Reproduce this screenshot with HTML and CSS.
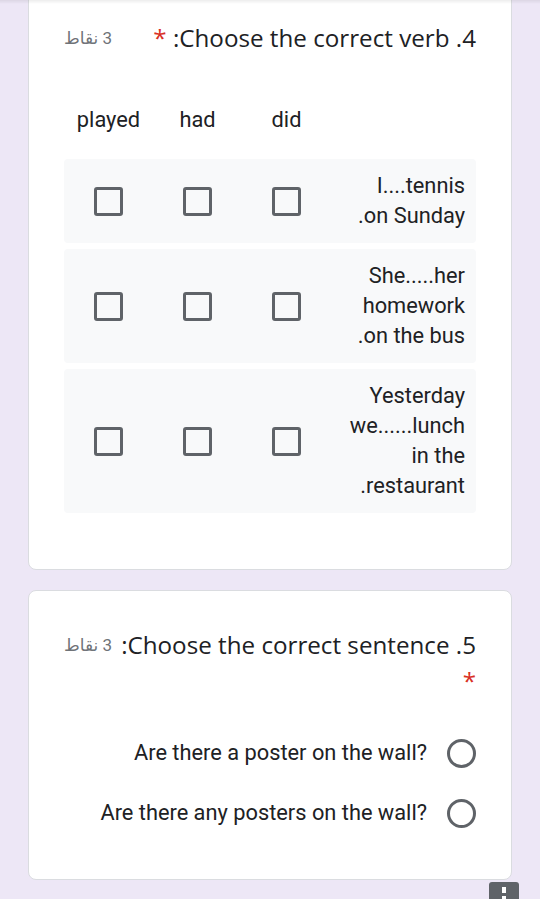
FILE: index.html
```html
<!DOCTYPE html>
<html lang="ar" dir="rtl">
<head>
<meta charset="utf-8">
<title>Form</title>
<link rel="stylesheet" href="styles.css">
</head>
<body>
<div class="top-shade"></div>
<main class="page">
  <section class="card card-first">
    <div class="q-head">
      <div class="q-title"><span class="q-text">4. Choose the correct verb:</span> <span class="req">*</span></div>
      <div class="q-points">3 نقاط</div>
    </div>
    <div class="grid" dir="ltr">
      <div class="grid-head">
        <span>played</span><span>had</span><span>did</span><span></span>
      </div>
      <div class="grid-rows">
        <div class="grid-row">
          <span class="cell"><span class="cb"></span></span>
          <span class="cell"><span class="cb"></span></span>
          <span class="cell"><span class="cb"></span></span>
          <span class="row-label" dir="rtl">I....tennis<br>on Sunday.</span>
        </div>
        <div class="grid-row">
          <span class="cell"><span class="cb"></span></span>
          <span class="cell"><span class="cb"></span></span>
          <span class="cell"><span class="cb"></span></span>
          <span class="row-label" dir="rtl">She.....her<br>homework<br>on the bus.</span>
        </div>
        <div class="grid-row">
          <span class="cell"><span class="cb"></span></span>
          <span class="cell"><span class="cb"></span></span>
          <span class="cell"><span class="cb"></span></span>
          <span class="row-label" dir="rtl">Yesterday<br>we......lunch<br>in the<br>restaurant.</span>
        </div>
      </div>
    </div>
  </section>

  <section class="card card-second">
    <div class="q-head q-head-tight">
      <div class="q-title q-title-tall"><span class="q-text">5. Choose the correct sentence:</span> <span class="req req-block">*</span></div>
      <div class="q-points q-points-tall">3 نقاط</div>
    </div>
    <div class="options">
      <div class="option"><span class="radio"></span><span class="opt-text" dir="ltr">Are there a poster on the wall?</span></div>
      <div class="option"><span class="radio"></span><span class="opt-text" dir="ltr">Are there any posters on the wall?</span></div>
    </div>
  </section>

  <div class="footer">
    <span class="badge">
      <svg width="30" height="24" viewBox="0 0 30 24"><rect x="13" y="5" width="4" height="6" fill="#fff"/><rect x="13" y="14" width="4" height="6" fill="#fff"/></svg>
    </span>
  </div>
</main>
</body>
</html>
```

FILE: styles.css
```css
html, body {
  margin: 0;
  padding: 0;
}

body {
  background: #ede7f6;
  font-family: Roboto, "DejaVu Sans", sans-serif;
  color: #202124;
  overflow: hidden;
}

.top-shade {
  position: fixed;
  top: 0;
  left: 0;
  right: 0;
  height: 4px;
  background: linear-gradient(to bottom, rgba(0, 0, 0, 0.07), rgba(0, 0, 0, 0));
  z-index: 2;
}

.page {
  padding: 0 28px;
}

.card {
  background: #fff;
  border: 1px solid #dadce0;
  border-radius: 8px;
  padding: 36px 35px;
}

.card-first {
  margin-top: -12px;
  padding-top: 33px;
  padding-bottom: 56px;
}

.card-second {
  margin-top: 20px;
  padding-top: 36px;
  padding-bottom: 36px;
}

.q-head {
  display: flex;
  justify-content: space-between;
  align-items: flex-start;
  gap: 12px;
}

.q-head-tight {
  gap: 8px;
}

.q-title {
  font-family: "Open Sans", sans-serif;
  font-size: 24.2px;
  line-height: 32px;
  color: #202124;
}

.q-text {
  white-space: nowrap;
}

.q-title-tall {
  line-height: 36px;
}

.req {
  color: #d93025;
}

.req-block {
  display: block;
}

.q-points {
  font-size: 17px;
  line-height: 32px;
  color: #6f7378;
  white-space: nowrap;
  flex-shrink: 0;
}

.q-points-tall {
  line-height: 36px;
}

.grid {
  margin-top: 51px;
}

.grid-head,
.grid-row {
  display: grid;
  grid-template-columns: 1fr 1fr 1fr 145px;
}

.grid-head {
  font-size: 21.8px;
  line-height: 30px;
  text-align: center;
  margin-bottom: 24px;
}

.grid-rows {
  display: flex;
  flex-direction: column;
  gap: 6px;
}

.grid-row {
  background: #f8f9fa;
  border-radius: 4px;
  align-items: center;
}

.cell {
  display: flex;
  justify-content: center;
}

.cb {
  width: 29px;
  height: 29px;
  box-sizing: border-box;
  border: 3px solid #5f6368;
  border-radius: 3px;
}

.row-label {
  padding: 12px 11px;
  font-size: 21.8px;
  line-height: 30px;
  text-align: right;
}

.options {
  margin-top: 24px;
}

.option {
  display: flex;
  align-items: center;
  gap: 20px;
  height: 60px;
}

.radio {
  width: 29px;
  height: 29px;
  box-sizing: border-box;
  border: 3px solid #5f6368;
  border-radius: 50%;
  flex-shrink: 0;
}

.opt-text {
  font-size: 21.8px;
  line-height: 30px;
}

.footer {
  display: flex;
  justify-content: flex-start;
  margin-top: 2px;
}

.badge {
  display: block;
  width: 30px;
  height: 24px;
  margin-right: -7px;
  background: #5f6368;
  border-radius: 3px 3px 0 0;
}

.badge svg {
  display: block;
}
```
